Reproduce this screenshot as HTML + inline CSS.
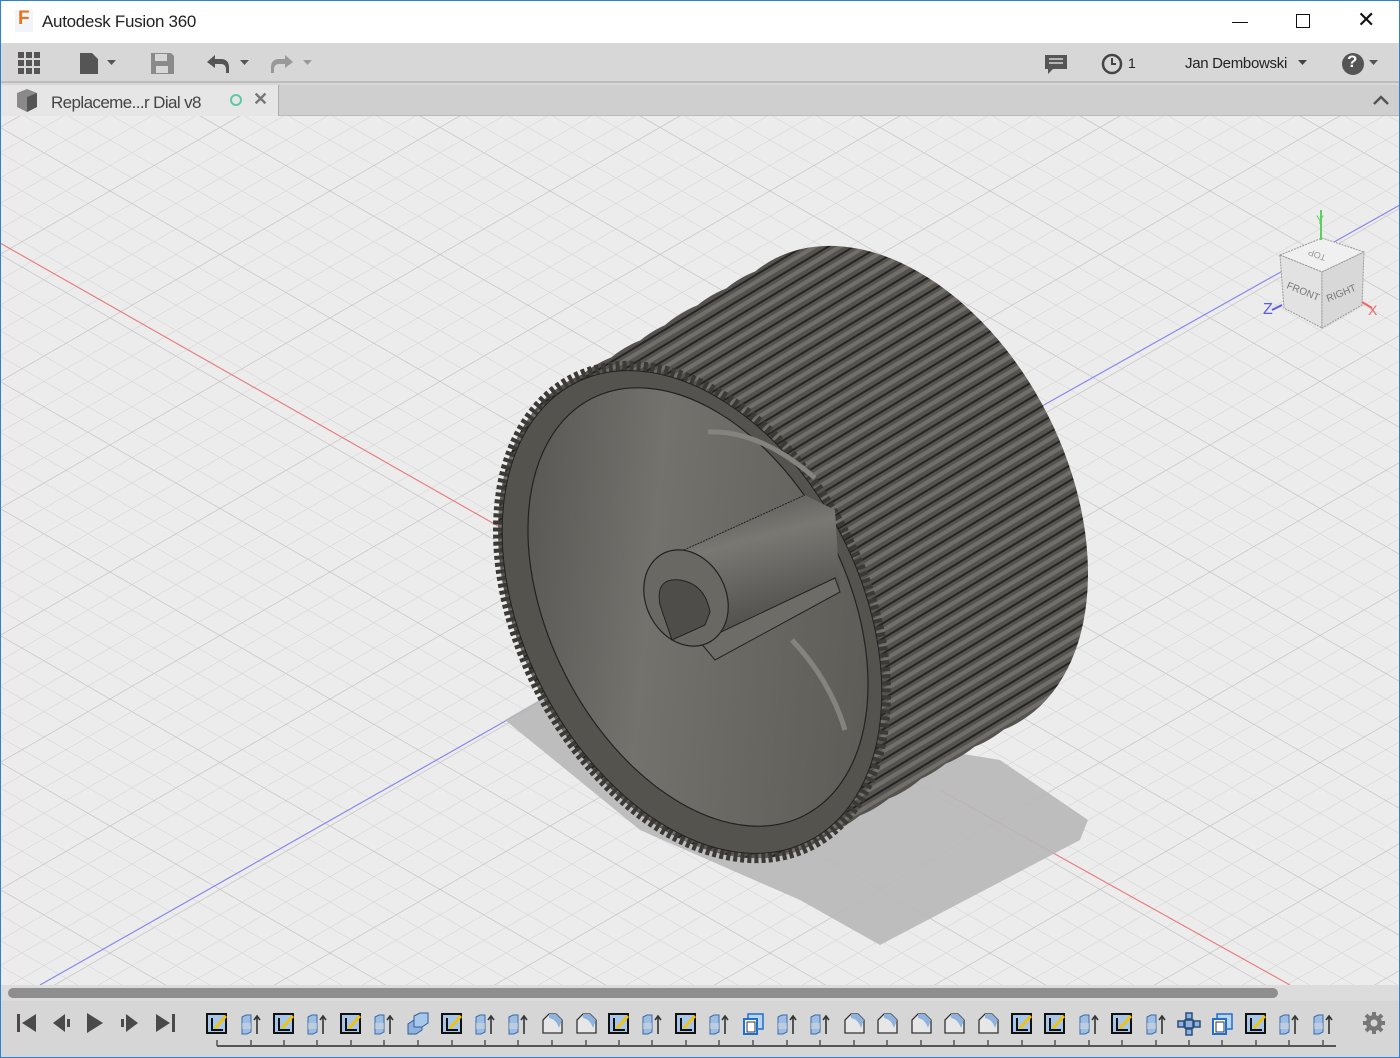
<!DOCTYPE html>
<html><head><meta charset="utf-8"><style>
*{margin:0;padding:0;box-sizing:border-box}
body{width:1400px;height:1058px;overflow:hidden;background:#d8d8d8;font-family:"Liberation Sans",sans-serif;position:relative}
.win{position:absolute;left:0;top:0;width:1400px;height:1058px;border:1px solid #2f7fd3}
.title{position:absolute;left:1px;top:1px;width:1398px;height:42px;background:#fff}
.tb{position:absolute;left:1px;top:43px;width:1398px;height:40px;background:#d7d7d7;border-bottom:2px solid #bdbdbd}
.tabbar{position:absolute;left:1px;top:85px;width:1398px;height:31px;background:#cfcfcf;border-bottom:1px solid #bbb}
.tab{position:absolute;left:0;top:0;width:278px;height:31px;background:#e6e6e6;border-right:1px solid #aaa}
.vp{position:absolute;left:1px;top:116px;width:1398px;height:869px;background:#ececec;overflow:hidden}
.sb{position:absolute;left:1px;top:985px;width:1398px;height:16px;background:#dcdcdc}
.bot{position:absolute;left:1px;top:1001px;width:1398px;height:56px;background:#d6d6d6}
.t{position:absolute;font-size:16px;color:#222}
</style></head><body>
<div class="win"></div>
<div class="title">
 <div style="position:absolute;left:14px;top:9px;width:18px;height:22px;background:#f1f4f8"></div>
 <div style="position:absolute;left:17px;top:7px;font:bold 19px 'Liberation Sans';color:#e8731a">F</div>
 <div class="t" style="left:41px;top:11px;font-size:17px;letter-spacing:-0.3px">Autodesk Fusion 360</div>
 <div style="position:absolute;left:1231px;top:21px;width:16px;height:1px;background:#111"></div>
 <div style="position:absolute;left:1295px;top:13px;width:14px;height:14px;border:1px solid #111"></div>
 <div style="position:absolute;left:1356px;top:6px;font-size:22px;color:#111">✕</div>
</div>
<div class="tb">
 <svg width="1398" height="40" style="position:absolute;left:0;top:0">
  <g fill="#555"><rect x="17" y="9" width="6" height="6"/><rect x="25" y="9" width="6" height="6"/><rect x="33" y="9" width="6" height="6"/><rect x="17" y="17" width="6" height="6"/><rect x="25" y="17" width="6" height="6"/><rect x="33" y="17" width="6" height="6"/><rect x="17" y="25" width="6" height="6"/><rect x="25" y="25" width="6" height="6"/><rect x="33" y="25" width="6" height="6"/></g>
  <path d="M79 10h12l6 6v15h-18z" fill="#555"/><path d="M106 17h9l-4.5 5z" fill="#555"/>
  <path d="M150 10h20l3 3v18h-23z" fill="#8a8a8a"/><rect x="154" y="11" width="12" height="7" fill="#d7d7d7"/><rect x="155" y="23" width="12" height="7" fill="#d7d7d7"/>
  <path d="M206 19l8-7v4h6c5 0 8 3 8 8v6h-3v-4c0-3-2-5-5-5h-6v4z" fill="#555"/><path d="M239 17h9l-4.5 5z" fill="#555"/>
  <path d="M292 19l-8-7v4h-6c-5 0-8 3-8 8v6h3v-4c0-3 2-5 5-5h6v4z" fill="#999"/><path d="M302 17h9l-4.5 5z" fill="#999"/>
  <path d="M1044 12h22v14h-14l-5 5v-5h-3z" fill="#555"/><g stroke="#d7d7d7" stroke-width="1.5"><path d="M1048 16h14M1048 20h14"/></g>
  <circle cx="1111" cy="21" r="9" fill="none" stroke="#444" stroke-width="2.5"/><path d="M1111 15v6h4" stroke="#444" stroke-width="2" fill="none"/>
  <circle cx="1352" cy="21" r="11" fill="#555"/><path d="M1368 17h9l-4.5 5z" fill="#555"/><path d="M1297 17h9l-4.5 5z" fill="#444"/>
 </svg>
 <div class="t" style="left:1127px;top:12px;font-size:14px">1</div>
 <div class="t" style="left:1184px;top:12px;font-size:15px;letter-spacing:-0.3px">Jan Dembowski</div>
 <div class="t" style="left:1346px;top:9px;font-size:17px;font-weight:bold;color:#fff">?</div>
</div>
<div class="tabbar"><div class="tab">
 <svg width="30" height="30" style="position:absolute;left:12px;top:2px"><path d="M4 6l10-4 10 4v14l-10 5-10-5z" fill="#8a8a8a"/><path d="M14 10v15l10-5V6z" fill="#555"/></svg>
 <div class="t" style="left:50px;top:8px;font-size:17px;color:#444;letter-spacing:-0.6px">Replaceme...r Dial v8</div>
 <div style="position:absolute;left:229px;top:9px;width:12px;height:12px;border:2px solid #5cc9a2;border-radius:50%"></div>
 <div style="position:absolute;left:252px;top:4px;font-size:18px;font-weight:bold;color:#777">✕</div>
</div>
<svg width="20" height="20" style="position:absolute;left:1370px;top:6px"><path d="M3 13l7-7 7 7" stroke="#555" stroke-width="2.5" fill="none"/></svg>
</div>
<div class="vp">
<svg width="1398" height="869" viewBox="1 116 1398 869" style="position:absolute;left:0;top:0">
 <defs>
  <pattern id="g1" width="22" height="22" patternUnits="userSpaceOnUse" patternTransform="rotate(30)"><path d="M0 0H22" stroke="#d2d2d2" stroke-width="1"/></pattern>
  <pattern id="g2" width="22" height="22" patternUnits="userSpaceOnUse" patternTransform="rotate(-30)"><path d="M0 0H22" stroke="#d2d2d2" stroke-width="1"/></pattern>
  <pattern id="g3" width="110" height="110" patternUnits="userSpaceOnUse" patternTransform="rotate(30)"><path d="M0 0H110" stroke="#c4c4c4" stroke-width="1.3"/></pattern>
  <pattern id="g4" width="110" height="110" patternUnits="userSpaceOnUse" patternTransform="rotate(-30)"><path d="M0 0H110" stroke="#c4c4c4" stroke-width="1.3"/></pattern>
  <pattern id="rib" width="13" height="13" patternUnits="userSpaceOnUse" patternTransform="rotate(-31)"><rect width="13" height="13" fill="#55534f"/><rect y="0" width="13" height="2" fill="#262523"/><rect y="5" width="13" height="4" fill="#716f6a"/></pattern>
  <linearGradient id="face" x1="0" y1="0" x2="1" y2="1"><stop offset="0" stop-color="#4d4b47"/><stop offset=".4" stop-color="#73726d"/><stop offset="1" stop-color="#57554f"/></linearGradient>
  <linearGradient id="shaft" x1="0" y1="0" x2="0.3" y2="1"><stop offset="0" stop-color="#4f4d49"/><stop offset=".4" stop-color="#7a7873"/><stop offset="1" stop-color="#4a4844"/></linearGradient>
  <clipPath id="hull">
   <ellipse rx="172" ry="262" transform="translate(692 612) rotate(-27)"/>
   <ellipse rx="172" ry="262" transform="translate(721 595) rotate(-27)"/>
   <ellipse rx="172" ry="262" transform="translate(750 578) rotate(-27)"/>
   <ellipse rx="172" ry="262" transform="translate(779 561) rotate(-27)"/>
   <ellipse rx="172" ry="262" transform="translate(807 543) rotate(-27)"/>
   <ellipse rx="172" ry="262" transform="translate(836 526) rotate(-27)"/>
   <ellipse rx="172" ry="262" transform="translate(865 509) rotate(-27)"/>
   <ellipse rx="172" ry="262" transform="translate(894 492) rotate(-27)"/>
  </clipPath>
 </defs>
 <rect x="0" y="100" width="1400" height="900" fill="url(#g1)"/>
 <rect x="0" y="100" width="1400" height="900" fill="url(#g2)"/>
 <rect x="0" y="100" width="1400" height="900" fill="url(#g3)"/>
 <rect x="0" y="100" width="1400" height="900" fill="url(#g4)"/>
 <path d="M0 243L505 530M940 790L1290 985" stroke="#e88080" stroke-width="1.2"/>
 <path d="M40 985L560 690M1035 410L1400 205" stroke="#8888ee" stroke-width="1.2"/>
 <path d="M505 720L560 688L1000 760L1088 820L1080 840L880 945L800 900L640 830Z" fill="#b8b8b8" opacity=".9"/>
 <rect x="450" y="200" width="700" height="700" fill="url(#rib)" clip-path="url(#hull)"/>
 <ellipse rx="172" ry="262" transform="translate(692 612) rotate(-27)" fill="none" stroke="#3c3a37" stroke-width="10" stroke-dasharray="4 3"/>
 <ellipse rx="168" ry="257" transform="translate(692 612) rotate(-27)" fill="#55534e" stroke="#222" stroke-width="1"/>
 <ellipse rx="149" ry="234" transform="translate(698 607) rotate(-27)" fill="url(#face)" stroke="#222" stroke-width="1.2"/>
 <path d="M708 432Q760 430 815 478" stroke="#85837e" stroke-width="5" fill="none"/>
 <path d="M792 640Q830 680 845 730" stroke="#85837e" stroke-width="5" fill="none"/>
 <path d="M660 560L805 495L835 510L840 590L720 652Z" fill="url(#shaft)"/>
 <path d="M700 642L835 578L840 592L715 660Z" fill="#6e6c67" stroke="#222" stroke-width="1"/>
 <path d="M662 560L805 495" stroke="#222" stroke-width="1" stroke-dasharray="2 1"/>
 <ellipse cx="686" cy="598" rx="40" ry="50" transform="rotate(-27 686 598)" fill="#6a6863" stroke="#222" stroke-width="1.2"/>
 <path d="M660 605Q655 577 680 580Q705 584 710 612L705 625L672 640Z" fill="#4f4d49" stroke="#222"/>
 <g transform="translate(1280 210)">
  <path d="M0 45L42 28L84 42L42 62Z" fill="#f0f0f0" stroke="#999" stroke-dasharray="2 1"/>
  <path d="M0 45L42 62L42 118L4 98Z" fill="#e2e2e2" stroke="#999" stroke-dasharray="2 1"/>
  <path d="M42 62L84 42L82 95L42 118Z" fill="#d8d8d8" stroke="#999" stroke-dasharray="2 1"/>
  <path d="M41 0V30" stroke="#5ad15a" stroke-width="2"/><text x="36" y="14" font-size="12" fill="#5ad15a">Y</text>
  <path d="M2 95L-8 100" stroke="#5a5ae8" stroke-width="2"/><text x="-17" y="104" font-size="16" fill="#5a5ae8">Z</text>
  <path d="M82 92L92 98" stroke="#ee6666" stroke-width="2"/><text x="88" y="105" font-size="14" fill="#ee6666">X</text>
  <text x="6" y="78" font-size="10" fill="#777" transform="rotate(22 6 78)">FRONT</text>
  <text x="48" y="92" font-size="10" fill="#777" transform="rotate(-22 48 92)">RIGHT</text>
  <text x="34" y="49" font-size="9" fill="#999" transform="rotate(200 40 46)">TOP</text>
 </g>
</svg></div>
<div class="sb"><div style="position:absolute;left:7px;top:3px;width:1270px;height:10px;border-radius:5px;background:#8e8e8e"></div></div>
<div class="bot">
<svg width="1398" height="56" style="position:absolute;left:0;top:0">
 <defs>
  <symbol id="S" viewBox="0 0 24 24"><rect x="1" y="1" width="21" height="21" fill="#111"/><rect x="3" y="3" width="17" height="17" fill="#a7c6e8"/><path d="M7 6v12h11" stroke="#111" stroke-width="2" fill="none"/><path d="M9 15L20 3l2 2-11 12z" fill="#f5c400"/></symbol>
  <symbol id="E" viewBox="0 0 24 24"><path d="M3 5l4-2h5v17l-4 2H3z" fill="#9dbde3" stroke="#3b6aa8"/><path d="M3 14h9" stroke="#ddd" stroke-width="6" opacity=".5"/><path d="M18 22V5M15 8l3-4 3 4" stroke="#333" stroke-width="1.6" fill="none"/></symbol>
  <symbol id="F" viewBox="0 0 24 24"><path d="M3 21V8l6-6h7l6 6v13z" fill="#e7e7e7" stroke="#333" stroke-width="1.3"/><path d="M9 2h7l6 6-3 8c-2-6-5-9-10-10z" fill="#8fb3dc"/></symbol>
  <symbol id="B" viewBox="0 0 24 24"><rect x="7" y="2" width="15" height="15" fill="#bcd3ee" stroke="#1f6fd0" stroke-width="1.5"/><rect x="3" y="7" width="13" height="15" fill="#fff" stroke="#1f6fd0" stroke-width="2"/><rect x="6" y="10" width="8" height="10" fill="#fff" stroke="#333"/></symbol>
  <symbol id="J" viewBox="0 0 24 24"><path d="M2 12l6-4h8v10l-6 4H2z" fill="#8fb3dc" stroke="#2c5d9a"/><path d="M8 4l6-3h8v10l-6 4H8z" fill="#a9c7ea" stroke="#2c5d9a"/></symbol>
  <symbol id="M" viewBox="0 0 24 24"><g fill="#8fb3dc" stroke="#2c4c7a" stroke-width="1.5"><rect x="9" y="1" width="6" height="6"/><rect x="1" y="9" width="6" height="6"/><rect x="17" y="9" width="6" height="6"/><rect x="9" y="17" width="6" height="6"/><rect x="8" y="8" width="8" height="8"/></g></symbol>
 </defs>
 <g fill="#4a4a4a">
  <rect x="16" y="13" width="3" height="18"/><path d="M35 13v18l-14-9z"/>
  <path d="M64 13v18l-12-9z"/><rect x="66" y="18" width="3" height="8"/>
  <path d="M86 12v20l16-10z"/>
  <rect x="120" y="18" width="3" height="8"/><path d="M125 13v18l12-9z"/>
  <path d="M155 13v18l14-9z"/><rect x="171" y="13" width="3" height="18"/>
 </g>
 <g>
  <use href="#S" x="204" y="11" width="24" height="24"/><use href="#E" x="238" y="11" width="24" height="24"/>
  <use href="#S" x="271" y="11" width="24" height="24"/><use href="#E" x="304" y="11" width="24" height="24"/>
  <use href="#S" x="338" y="11" width="24" height="24"/><use href="#E" x="371" y="11" width="24" height="24"/>
  <use href="#J" x="405" y="11" width="24" height="24"/><use href="#S" x="439" y="11" width="24" height="24"/>
  <use href="#E" x="472" y="11" width="24" height="24"/><use href="#E" x="505" y="11" width="24" height="24"/>
  <use href="#F" x="539" y="11" width="24" height="24"/><use href="#F" x="573" y="11" width="24" height="24"/>
  <use href="#S" x="606" y="11" width="24" height="24"/><use href="#E" x="639" y="11" width="24" height="24"/>
  <use href="#S" x="673" y="11" width="24" height="24"/><use href="#E" x="706" y="11" width="24" height="24"/>
  <use href="#B" x="740" y="11" width="24" height="24"/><use href="#E" x="774" y="11" width="24" height="24"/>
  <use href="#E" x="807" y="11" width="24" height="24"/><use href="#F" x="841" y="11" width="24" height="24"/>
  <use href="#F" x="874" y="11" width="24" height="24"/><use href="#F" x="908" y="11" width="24" height="24"/>
  <use href="#F" x="941" y="11" width="24" height="24"/><use href="#F" x="975" y="11" width="24" height="24"/>
  <use href="#S" x="1009" y="11" width="24" height="24"/><use href="#S" x="1042" y="11" width="24" height="24"/>
  <use href="#E" x="1076" y="11" width="24" height="24"/><use href="#S" x="1109" y="11" width="24" height="24"/>
  <use href="#E" x="1143" y="11" width="24" height="24"/><use href="#M" x="1176" y="11" width="24" height="24"/>
  <use href="#B" x="1209" y="11" width="24" height="24"/><use href="#S" x="1243" y="11" width="24" height="24"/>
  <use href="#E" x="1276" y="11" width="24" height="24"/><use href="#E" x="1310" y="11" width="24" height="24"/>
 </g>
 <path d="M216 45H1335" stroke="#555" stroke-width="2"/>
 <path d="M216 39v6M250 39v6M283 39v6M316 39v6M350 39v6M383 39v6M417 39v6M451 39v6M484 39v6M517 39v6M551 39v6M585 39v6M618 39v6M651 39v6M685 39v6M718 39v6M752 39v6M786 39v6M819 39v6M853 39v6M886 39v6M920 39v6M953 39v6M987 39v6M1021 39v6M1054 39v6M1088 39v6M1121 39v6M1155 39v6M1188 39v6M1221 39v6M1255 39v6M1288 39v6M1322 39v6" stroke="#555" stroke-width="1.5"/>
 <g transform="translate(1373 22)" fill="#777"><circle r="8"/><g stroke="#777" stroke-width="4"><path d="M0-11V11M-11 0H11M-8-8L8 8M-8 8L8-8"/></g><circle r="3.5" fill="#d6d6d6"/></g>
</svg>
</div>
</body></html>
